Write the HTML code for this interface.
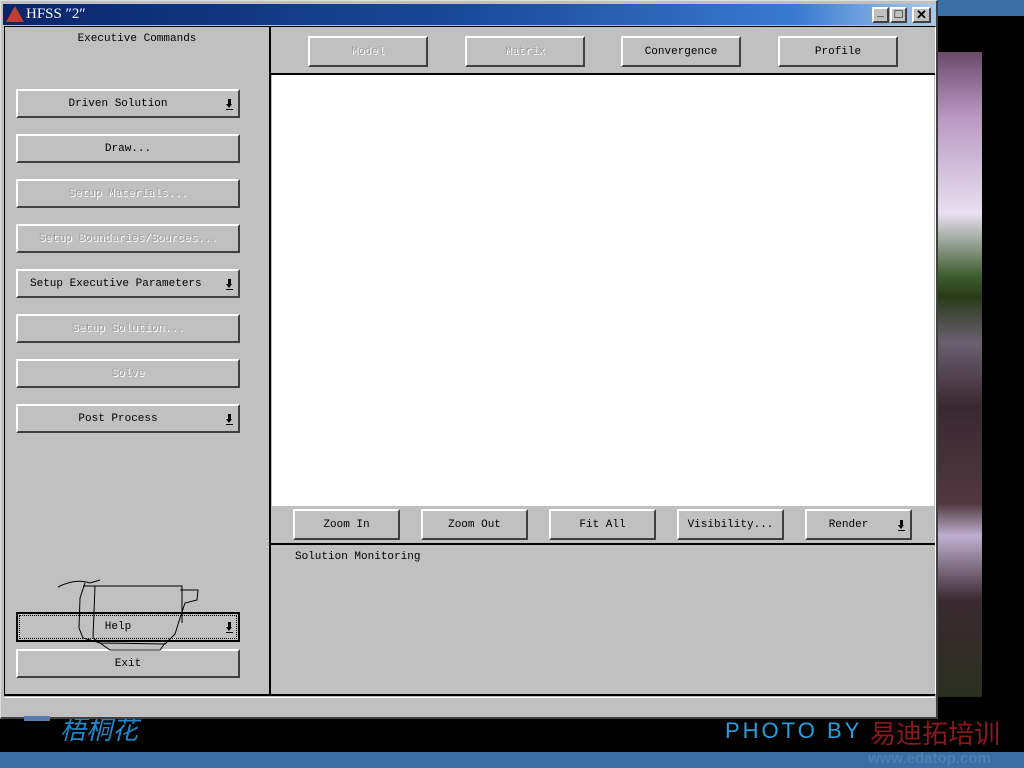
<!DOCTYPE html>
<html><head><style>
*{margin:0;padding:0;box-sizing:border-box}
body{width:1024px;height:768px;background:#000;position:relative;overflow:hidden;font-family:"Liberation Mono",monospace;font-size:11px;color:#000}
.a{position:absolute}
.btn{position:absolute;background:#c0c0c0;border-top:2px solid #fff;border-left:2px solid #fff;border-right:2px solid #404040;border-bottom:2px solid #404040;text-align:center;line-height:27px}
.dis{color:#a0a0a0;text-shadow:1px 1px 0 #fff}
.arr{position:absolute;right:5px;top:8px;width:7px;height:11px;border-bottom:1px solid #000}
.arr:before{content:"";position:absolute;left:2px;top:0;width:3px;height:5px;background:#000}
.arr:after{content:"";position:absolute;left:0;top:5px;border-left:3.5px solid transparent;border-right:3.5px solid transparent;border-top:4px solid #000}
</style></head><body>
<div class="a" style="left:936px;top:0;width:88px;height:16px;background:#3a6ea5"></div>
<div class="a" style="left:938px;top:52px;width:44px;height:645px;background:linear-gradient(#6a4a6a 0%,#b898c0 10%,#e8e0f0 25%,#3a5a2a 35%,#2a3a1a 38%,#6a6070 45%,#3a2830 55%,#503840 70%,#c0b0d0 75%,#3a2a30 85%,#2a3020 100%)"></div>
<div class="a" style="left:0;top:752px;width:1024px;height:16px;background:#3a6ea5"></div>
<div class="a" style="left:60px;top:712px;font-size:26px;color:#1e88c8;font-family:'Noto Sans CJK SC',sans-serif;line-height:34px;font-style:italic">梧桐花</div>
<div class="a" style="left:725px;top:718px;font-size:22px;color:#28a0e0;font-family:'Liberation Sans',sans-serif;letter-spacing:3px">PHOTO BY</div>
<div class="a" style="left:870px;top:716px;font-size:26px;color:#b02020;font-family:'Noto Sans CJK SC',sans-serif;line-height:34px;opacity:.8">易迪拓培训</div>
<div class="a" style="left:868px;top:750px;font-size:15px;color:#5080b0;font-family:'Liberation Sans',sans-serif;font-weight:bold">www.edatop.com</div>
<div class="a" style="left:0;top:0;width:938px;height:719px;background:#c0c0c0;border-right:2px solid #404040;border-bottom:2px solid #404040;border-top:1px solid #dfdfdf;border-left:1px solid #dfdfdf"></div>
<div class="a" style="left:3px;top:4px;width:932px;height:21px;background:linear-gradient(90deg,#0a246a,#1a4a9a 50%,#3a7ad0 85%,#a6caf0)"></div>
<div class="a" style="left:6px;top:6px;width:0;height:0;border-left:9px solid transparent;border-right:9px solid transparent;border-bottom:16px solid #c04030"></div>
<div class="a" style="left:26px;top:5px;color:#fff;font-family:'Liberation Serif',serif;font-size:15px;line-height:19px">HFSS ″2″</div>
<div class="btn" style="left:872px;top:7px;width:17px;height:16px;line-height:10px;font-weight:bold">_</div>
<div class="btn" style="left:890px;top:7px;width:17px;height:16px;line-height:12px;font-size:13px">□</div>
<div class="btn" style="left:912px;top:7px;width:19px;height:16px;line-height:12px;font-weight:bold;font-size:13px;font-family:'Liberation Sans'">✕</div>
<div class="a" style="left:4px;top:26px;width:932px;height:669px;border:1px solid #000;border-right-color:#fff"></div>
<div class="a" style="left:269px;top:26px;width:2px;height:669px;background:#000"></div>
<div class="a" style="left:4px;top:694px;width:931px;height:2px;background:#000"></div>
<div class="a" style="left:5px;top:33px;width:264px;text-align:center">Executive Commands</div>
<div class="btn" style="left:16px;top:89px;width:224px;height:29px;padding-right:20px">Driven Solution<span class="arr"></span></div>
<div class="btn" style="left:16px;top:134px;width:224px;height:29px">Draw...</div>
<div class="btn dis" style="left:16px;top:179px;width:224px;height:29px">Setup Materials...</div>
<div class="btn dis" style="left:16px;top:224px;width:224px;height:29px">Setup Boundaries/Sources...</div>
<div class="btn" style="left:16px;top:269px;width:224px;height:29px;text-align:left;padding-left:12px">Setup Executive Parameters<span class="arr"></span></div>
<div class="btn dis" style="left:16px;top:314px;width:224px;height:29px">Setup Solution...</div>
<div class="btn dis" style="left:16px;top:359px;width:224px;height:29px">Solve</div>
<div class="btn" style="left:16px;top:404px;width:224px;height:29px;padding-right:20px">Post Process<span class="arr"></span></div>
<div class="btn" style="left:16px;top:612px;width:224px;height:30px;border:2px solid #000;outline:1px dotted #000;outline-offset:-4px;padding-right:20px">Help<span class="arr"></span></div>
<div class="btn" style="left:16px;top:649px;width:224px;height:29px">Exit</div>
<svg class="a" style="left:55px;top:578px" width="150" height="75" fill="none" stroke="#000" stroke-width="1"><path d="M3 9 Q20 0 35 5 L45 2 M30 5 L25 20 L24 50 L28 60 L45 65 L110 66 L120 56 L125 40 L130 25 L142 22 L143 12 L125 12 M28 8 L127 8 L127 45 M40 8 L38 60 L55 72 L105 72 L110 65"/></svg>
<div class="a" style="left:272px;top:75px;width:662px;height:431px;background:#fff"></div>
<div class="a" style="left:271px;top:73px;width:664px;height:2px;background:#000"></div>
<div class="btn dis" style="left:308px;top:36px;width:120px;height:31px;line-height:28px">Model</div>
<div class="btn dis" style="left:465px;top:36px;width:120px;height:31px;line-height:28px">Matrix</div>
<div class="btn" style="left:621px;top:36px;width:120px;height:31px;line-height:28px">Convergence</div>
<div class="btn" style="left:778px;top:36px;width:120px;height:31px;line-height:28px">Profile</div>
<div class="btn" style="left:293px;top:509px;width:107px;height:31px;line-height:28px">Zoom In</div>
<div class="btn" style="left:421px;top:509px;width:107px;height:31px;line-height:28px">Zoom Out</div>
<div class="btn" style="left:549px;top:509px;width:107px;height:31px;line-height:28px">Fit All</div>
<div class="btn" style="left:677px;top:509px;width:107px;height:31px;line-height:28px">Visibility...</div>
<div class="btn" style="left:805px;top:509px;width:107px;height:31px;line-height:28px;padding-right:20px">Render<span class="arr" style="top:9px"></span></div>
<div class="a" style="left:271px;top:543px;width:664px;height:2px;background:#000"></div>
<div class="a" style="left:295px;top:551px">Solution Monitoring</div>
<div class="a" style="left:5px;top:697px;width:930px;height:18px;border-top:1px solid #fff"></div>
<div class="a" style="left:24px;top:716px;width:26px;height:5px;background:#5a7ab0"></div>
</body></html>
